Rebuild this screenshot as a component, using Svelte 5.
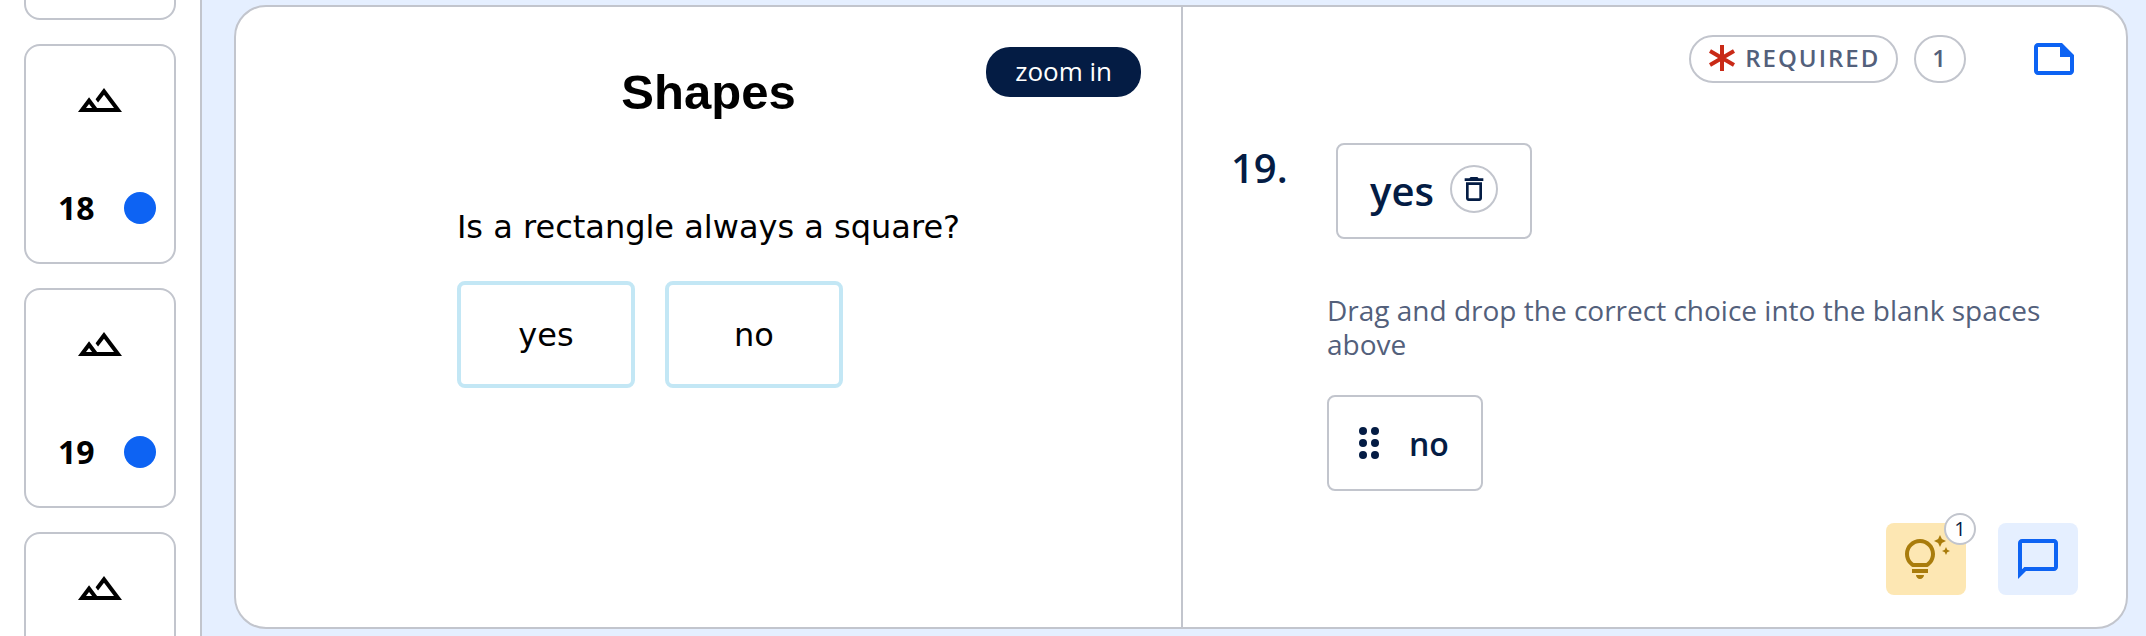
<script lang="ts">
  import { onMount } from "svelte";

  // null = page that is not loaded yet
  const pages = [null, 18, 19, null];
  const choices = ["yes", "no"];

  let list: HTMLElement;

  onMount(() => {
    // keep the current questions in view
    list.scrollTop = 224;
  });
</script>

<div class="app">
  <nav bind:this={list}>
    {#each pages as page}
      <button class="page" aria-label={page ? `Question ${page}` : "Question"}>
        <svg class="icon" viewBox="0 0 24 24" aria-hidden="true">
          <path
            d="M14 6l-4.22 5.63 1.25 1.67L14 9.33 19 16h-8.46l-4.01-5.37L1 18h22L14 6zM5 16l1.52-2.03L8.04 16H5z"
          />
        </svg>
        {#if page}
          <span class="page-info">
            {page}
            <span class="dot"></span>
          </span>
        {/if}
      </button>
    {/each}
  </nav>

  <main>
    <section class="stimulus">
      <button class="zoom">zoom in</button>
      <h1>Shapes</h1>
      <div class="figure">
        <p>Is a rectangle always a square?</p>
        <div class="choices">
          {#each choices as choice}
            <div class="choice">{choice}</div>
          {/each}
        </div>
      </div>
    </section>

    <section class="question">
      <header>
        <span class="tag required">
          <svg viewBox="0 0 26 26" aria-hidden="true">
            <path d="M13 0v26M1 6l24 14M25 6L1 20" />
          </svg>
          REQUIRED
        </span>
        <span class="tag points">1</span>
        <button class="note" aria-label="Note">
          <svg class="icon" viewBox="0 0 24 24" aria-hidden="true">
            <path
              d="M16 4H4c-1.100 0-2 .9-2 2v12.010c0 1.100.9 1.990 2 1.990h16c1.100 0 2-.9 2-2v-8l-6-6zM4 18V6h11v5h5v7H4z"
            />
          </svg>
        </button>
      </header>

      <div class="body">
        <span class="number">19.</span>
        <div class="answer">
          <div class="box dropped">
            <span>yes</span>
            <button class="remove" aria-label="Remove">
              <svg viewBox="0 0 24 24" aria-hidden="true">
                <path
                  d="M16 9v10H8V9h8m-1.500-6h-5l-1 1H5v2h14V4h-3.500l-1-1zM18 7H6v12c0 1.100.9 2 2 2h8c1.100 0 2-.9 2-2V7z"
                />
              </svg>
            </button>
          </div>
          <p>Drag and drop the correct choice into the blank spaces above</p>
          <button class="box drag">
            <svg class="icon" viewBox="0 0 24 24" aria-hidden="true">
              {#each [6, 12, 18] as cy}
                <circle cx="9" {cy} r="2" />
                <circle cx="15" {cy} r="2" />
              {/each}
            </svg>
            no
          </button>
        </div>
      </div>

      <footer>
        <button class="tool hint" aria-label="Hints">
          <svg class="icon" viewBox="0 0 24 24" aria-hidden="true">
            <path
              d="M7 20h4c0 1.100-.9 2-2 2s-2-.9-2-2zm-2-1h8v-2H5v2zm11.500-9.500c0 3.820-2.660 5.860-3.770 6.500H5.270c-1.110-.64-3.770-2.680-3.770-6.500C1.500 5.360 4.860 2 9 2s7.500 3.360 7.500 7.500zm-2 0C14.500 6.470 12.030 4 9 4S3.500 6.470 3.500 9.500c0 2.470 1.490 3.890 2.350 4.500h6.300c.86-.61 2.350-2.030 2.350-4.500zm6.870-2.130L20 8l1.370.63L22 10l.63-1.370L24 8l-1.370-.63L22 6l-.63 1.370zM19 6l.94-2.060L22 3l-2.060-.94L19 0l-.94 2.060L16 3l2.060.94L19 6z"
            />
          </svg>
          <span class="count">1</span>
        </button>
        <button class="tool chat" aria-label="Comments">
          <svg class="icon" viewBox="0 0 24 24" aria-hidden="true">
            <path
              d="M20 2H4c-1.100 0-2 .9-2 2v18l4-4h14c1.100 0 2-.9 2-2V4c0-1.100-.9-2-2-2zm0 14H5.170L4 17.170V4h16v12z"
            />
          </svg>
        </button>
      </footer>
    </section>
  </main>
</div>

<style>
  :global(*) {
    box-sizing: border-box;
  }
  :global(body) {
    margin: 0;
  }

  .app {
    --line: #c2c5cd;
    --navy: #041c44;
    --blue: #0d63f3;
    --pale: #e5efff;
    --muted: #53607b;

    display: flex;
    height: 100vh;
    background: var(--pale);
    color: var(--navy);
    font-family: "Open Sans", "Noto Sans", sans-serif;
  }

  h1,
  p {
    margin: 0;
  }
  button {
    padding: 0;
    border: none;
    background: none;
    color: inherit;
    font: inherit;
    cursor: pointer;
  }
  svg {
    display: block;
    flex: none;
    fill: currentColor;
  }
  .icon {
    width: 48px;
    height: 48px;
  }

  /* page list */
  nav {
    flex: none;
    display: flex;
    flex-direction: column;
    gap: 24px;
    padding: 24px;
    overflow-y: auto;
    scrollbar-width: none;
    border-right: 2px solid var(--line);
    background: white;
  }
  .page {
    flex: none;
    display: flex;
    flex-direction: column;
    align-items: center;
    justify-content: space-between;
    width: 152px;
    height: 220px;
    padding: 30px 18px 32px 32px;
    border: 2px solid var(--line);
    border-radius: 16px;
    color: black;
  }
  .page .icon {
    margin-right: 14px;
  }
  .page-info {
    display: flex;
    align-items: center;
    justify-content: space-between;
    width: 100%;
    font-size: 32px;
    font-weight: 700;
    line-height: 44px;
  }
  .dot {
    width: 32px;
    height: 32px;
    border-radius: 50%;
    background: var(--blue);
  }

  main {
    flex: 1;
    display: grid;
    grid-template-columns: 1fr 1fr;
    margin: 5px 18px 7px 32px;
    border: 2px solid var(--line);
    border-radius: 32px;
    background: white;
  }

  /* left side */
  .stimulus {
    position: relative;
    display: flex;
    flex-direction: column;
    align-items: center;
    padding-top: 57px;
    color: black;
  }
  .zoom {
    position: absolute;
    top: 40px;
    right: 40px;
    height: 50px;
    padding: 0 29px 2px;
    border-radius: 24px;
    background: var(--navy);
    color: white;
    font-size: 26px;
  }
  h1 {
    font-family: "Liberation Sans", Arial, sans-serif;
    font-size: 49px;
    line-height: 56px;
  }
  .figure {
    margin-top: 87px;
    font-family: Verdana, "DejaVu Sans", sans-serif;
    font-size: 32px;
    line-height: 40px;
  }
  .choices {
    display: flex;
    gap: 30px;
    margin-top: 34px;
  }
  .choice {
    display: flex;
    align-items: center;
    justify-content: center;
    width: 178px;
    height: 107px;
    border: 4px solid #c3e7f5;
    border-radius: 8px;
  }

  /* right side */
  .question {
    display: flex;
    flex-direction: column;
    padding: 28px 48px 32px;
    border-left: 2px solid var(--line);
  }
  header,
  footer {
    display: flex;
    justify-content: flex-end;
  }
  header {
    gap: 16px;
  }
  .tag {
    display: flex;
    align-items: center;
    height: 48px;
    border: 2px solid var(--line);
    border-radius: 24px;
    color: var(--muted);
    font-size: 24px;
    font-weight: 600;
    line-height: 32px;
    letter-spacing: 2px;
  }
  .required {
    gap: 10px;
    padding: 0 16px 2px 18px;
  }
  .required svg {
    width: 26px;
    height: 26px;
    stroke: #c92a17;
    stroke-width: 4;
  }
  .points {
    padding: 0 16px 2px;
  }
  .note {
    margin-left: 48px;
    color: var(--blue);
  }

  .body {
    flex: 1;
    display: grid;
    grid-template-columns: 96px 1fr;
    align-content: start;
    margin-top: 60px;
  }
  .number {
    font-size: 40px;
    font-weight: 600;
    line-height: 50px;
  }
  .box {
    display: flex;
    width: fit-content;
    height: 96px;
    border: 2px solid var(--line);
    border-radius: 8px;
    font-weight: 600;
  }
  .dropped {
    gap: 16px;
    margin-left: 9px;
    padding: 20px 32px;
    font-size: 40px;
    line-height: 52px;
  }
  .remove {
    display: grid;
    place-items: center;
    width: 48px;
    height: 48px;
    border: 2px solid var(--line);
    border-radius: 50%;
  }
  .remove svg {
    width: 32px;
    height: 32px;
  }
  .answer p {
    margin: 54px 0 34px;
    color: var(--muted);
    font-size: 28px;
    line-height: 34px;
  }
  .drag {
    align-items: center;
    gap: 16px;
    padding: 0 32px 0 16px;
    font-size: 32px;
    cursor: grab;
  }

  footer {
    gap: 32px;
  }
  .tool {
    position: relative;
    display: grid;
    place-items: center;
    width: 80px;
    height: 72px;
    border-radius: 8px;
  }
  .hint {
    background: #fde7b3;
    color: #a97c0c;
  }
  .chat {
    background: var(--pale);
    color: var(--blue);
  }
  .count {
    position: absolute;
    top: -10px;
    right: -10px;
    width: 32px;
    height: 32px;
    border: 2px solid var(--line);
    border-radius: 50%;
    background: white;
    color: var(--navy);
    font-size: 20px;
    line-height: 28px;
  }
</style>
